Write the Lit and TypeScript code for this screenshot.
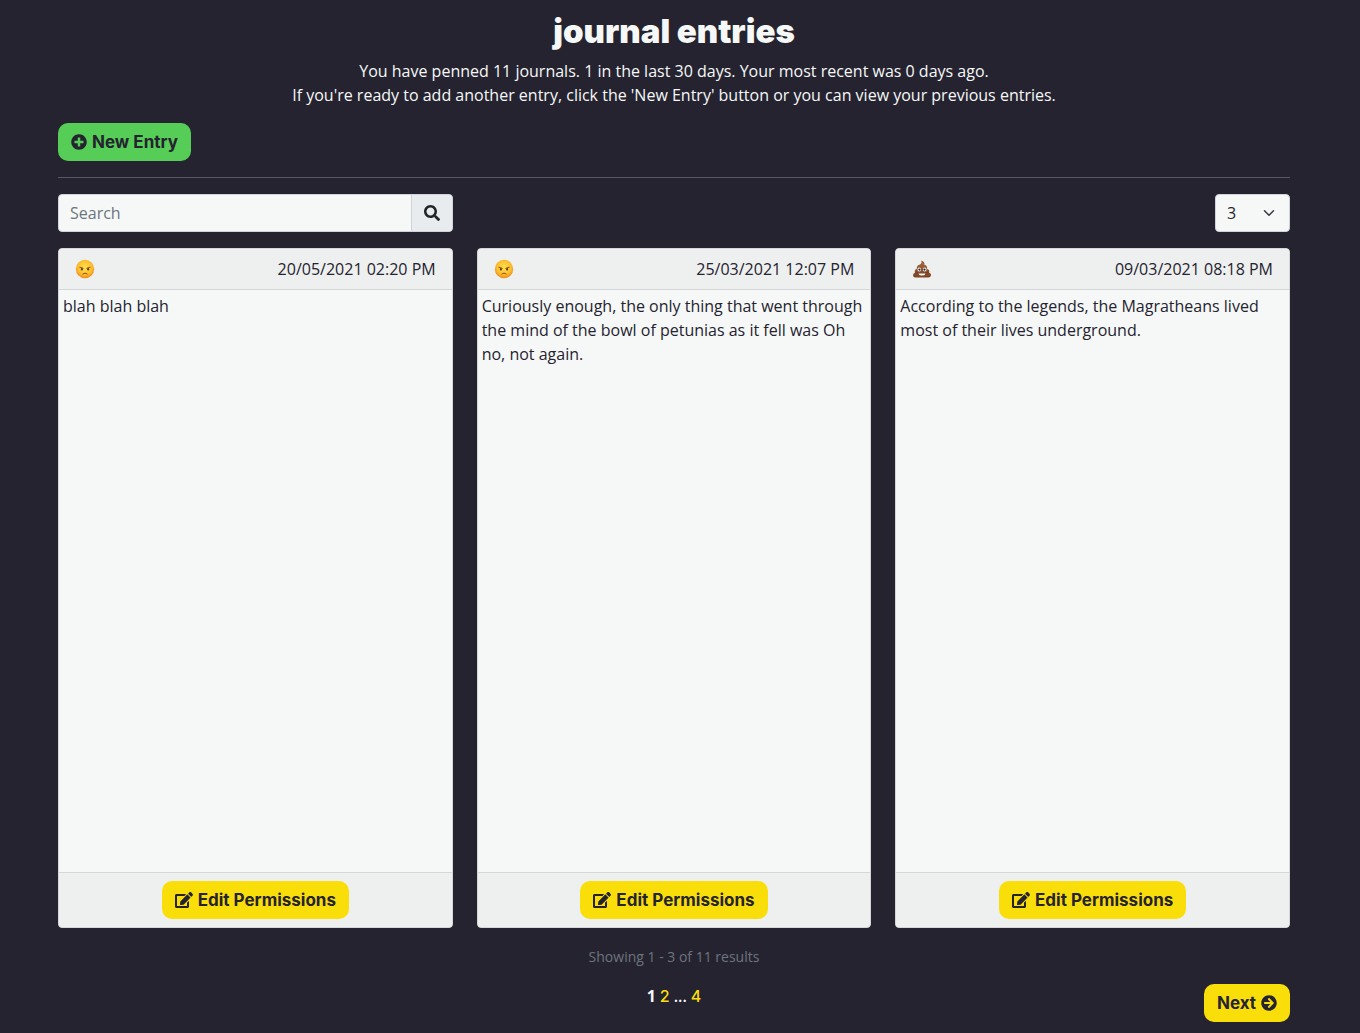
import { LitElement, html, css, svg } from "lit";
import { customElement, property, state } from "lit/decorators.js";

const ICONS = {
  plus: {
    box: "0 0 512 512",
    d: "M256 8C119 8 8 119 8 256s111 248 248 248 248-111 248-248S393 8 256 8zm144 276c0 6.6-5.4 12-12 12h-92v92c0 6.6-5.4 12-12 12h-56c-6.6 0-12-5.4-12-12v-92h-92c-6.6 0-12-5.4-12-12v-56c0-6.6 5.4-12 12-12h92v-92c0-6.6 5.4-12 12-12h56c6.6 0 12 5.4 12 12v92h92c6.6 0 12 5.4 12 12v56z",
  },
  search: {
    box: "0 0 512 512",
    d: "M505 442.7L405.3 343c-4.5-4.5-10.6-7-17-7H372c27.6-35.3 44-79.7 44-128C416 93.1 322.9 0 208 0S0 93.1 0 208s93.1 208 208 208c48.3 0 92.7-16.4 128-44v16.3c0 6.4 2.5 12.5 7 17l99.7 99.7c9.4 9.4 24.6 9.4 33.9 0l28.3-28.3c9.4-9.4 9.4-24.6.1-34zM208 336c-70.7 0-128-57.2-128-128 0-70.7 57.2-128 128-128 70.7 0 128 57.2 128 128 0 70.7-57.2 128-128 128z",
  },
  edit: {
    box: "0 0 576 512",
    d: "M402.6 83.2l90.2 90.2c3.8 3.8 3.8 10 0 13.8L274.4 405.6l-92.8 10.3c-12.4 1.4-22.9-9.1-21.5-21.5l10.3-92.8L388.8 83.2c3.8-3.8 10-3.8 13.8 0zm162-22.9l-48.8-48.8c-15.2-15.2-39.9-15.2-55.2 0l-35.4 35.4c-3.8 3.8-3.8 10 0 13.8l90.2 90.2c3.8 3.8 10 3.8 13.8 0l35.4-35.4c15.2-15.3 15.2-40 0-55.2zM384 346.2V448H64V128h229.8c3.2 0 6.2-1.3 8.5-3.5l40-40c7.6-7.6 2.2-20.5-8.5-20.5H48C21.5 64 0 85.5 0 112v352c0 26.5 21.5 48 48 48h352c26.5 0 48-21.5 48-48V306.2c0-10.7-12.9-16-20.5-8.5l-40 40c-2.2 2.3-3.5 5.3-3.5 8.5z",
  },
  next: {
    box: "0 0 512 512",
    d: "M256 8c137 0 248 111 248 248S393 504 256 504 8 393 8 256 119 8 256 8zm-28.9 143.6l75.5 72.4H120c-13.3 0-24 10.7-24 24v16c0 13.3 10.7 24 24 24h182.6l-75.5 72.4c-9.7 9.3-9.9 24.8-.4 34.3l11 10.9c9.4 9.4 24.6 9.4 33.9 0L404.3 273c9.4-9.4 9.4-24.6 0-33.9L271.6 106.3c-9.4-9.4-24.6-9.4-33.9 0l-11 10.9c-9.5 9.6-9.3 25.1.4 34.4z",
  },
};

const icon = (name: keyof typeof ICONS) => html`
  <svg class="icon icon-${name}" viewBox=${ICONS[name].box} aria-hidden="true">
    <path fill="currentColor" d=${ICONS[name].d}></path>
  </svg>
`;

type Mood = "angry" | "poo";

interface Entry {
  mood: Mood;
  date: string;
  text: string;
}

const ENTRIES: Entry[] = [
  { mood: "angry", date: "20/05/2021 02:20 PM", text: "blah blah blah" },
  {
    mood: "angry",
    date: "25/03/2021 12:07 PM",
    text: "Curiously enough, the only thing that went through the mind of the bowl of petunias as it fell was Oh no, not again.",
  },
  {
    mood: "poo",
    date: "09/03/2021 08:18 PM",
    text: "According to the legends, the Magratheans lived most of their lives underground.",
  },
];

const buttonStyles = css`
  .btn {
    display: inline-flex;
    align-items: center;
    justify-content: center;
    gap: 5px;
    height: 38px;
    padding: 0 13px;
    border: 0;
    border-radius: 10px;
    background: #fade0a;
    color: #252330;
    font: 700 17px/24px Inter, sans-serif;
    white-space: nowrap;
    cursor: pointer;
  }
  .btn.success {
    background: #55cd56;
  }
  .icon {
    display: block;
    flex: none;
    width: 16px;
    height: 16px;
  }
  .icon-edit {
    width: 18px;
  }
`;

@customElement("mood-face")
export class MoodFace extends LitElement {
  @property() mood: Mood = "angry";

  static styles = css`
    :host {
      display: block;
    }
    .face {
      display: block;
      width: 20px;
      height: 20px;
    }
  `;

  private angry() {
    return svg`
      <defs>
        <radialGradient id="skin" cx="50%" cy="42%" r="58%">
          <stop offset="0" stop-color="#ffdf4d"></stop>
          <stop offset="0.65" stop-color="#fdc02f"></stop>
          <stop offset="1" stop-color="#ee8a1d"></stop>
        </radialGradient>
      </defs>
      <circle cx="10" cy="10" r="9.2" fill="url(#skin)"></circle>
      <ellipse cx="6.9" cy="10.2" rx="1" ry="1.3" fill="#64380f"></ellipse>
      <ellipse cx="13.1" cy="10.2" rx="1" ry="1.3" fill="#64380f"></ellipse>
      <path d="M4.8 8.2Q6.8 8.3 8.2 9.3M15.2 8.2Q13.2 8.3 11.8 9.3M7.8 14.9Q10 13.1 12.2 14.9"
        fill="none" stroke="#7a4310" stroke-width=".9" stroke-linecap="round"></path>
    `;
  }

  private poo() {
    return svg`
      <defs>
        <linearGradient id="swirl" x1="0" y1="0" x2="0" y2="1">
          <stop offset="0" stop-color="#a5673f"></stop>
          <stop offset="1" stop-color="#7c4324"></stop>
        </linearGradient>
      </defs>
      <path d="M9.2 1.6C11.6 2.3 12.9 3.8 12.4 5.7C14.5 6.2 15.6 7.8 15 9.8C17 10.5 17.8 12 17.1 13.7
        C18.9 14.3 19.4 15.7 18.8 17C18.2 18.4 16.9 18.5 15.4 18.5H4.5C2.8 18.5 1.6 18.3 1.2 17
        C.7 15.5 1.5 14.2 3 13.7C2.3 12 3.1 10.4 4.9 9.8C4.4 7.8 5.5 6.4 7.4 5.8C9.4 5.2 9.9 3.8 9.2 1.6Z"
        fill="url(#swirl)"></path>
      <path d="M5.2 10Q10 11.4 14.4 9.5M3.4 14Q10 15 16.6 13.8" fill="none" stroke="#64331a" stroke-width=".6"></path>
      <ellipse cx="7.3" cy="10.5" rx="1.8" ry="2.1" fill="#fff"></ellipse>
      <ellipse cx="12.7" cy="10.5" rx="1.8" ry="2.1" fill="#fff"></ellipse>
      <circle cx="7.5" cy="10.6" r="1.1" fill="#22222a"></circle>
      <circle cx="12.5" cy="10.6" r="1.1" fill="#22222a"></circle>
      <path d="M6.4 14.4H13.6Q12.8 16.6 10 16.6Q7.2 16.6 6.4 14.4Z" fill="#fff"></path>
    `;
  }

  render() {
    return html`
      <svg class="face" viewBox="0 0 20 20" role="img" aria-label=${this.mood}>
        ${this.mood === "angry" ? this.angry() : this.poo()}
      </svg>
    `;
  }
}

@customElement("journal-card")
export class JournalCard extends LitElement {
  @property({ attribute: false }) entry!: Entry;

  static styles = [
    buttonStyles,
    css`
      :host {
        display: block;
        min-width: 0;
      }
      .card {
        box-sizing: border-box;
        display: flex;
        flex-direction: column;
        min-height: 680px;
        height: 100%;
        border: 1px solid #d4d6d7;
        border-radius: 4px;
        background: #f6f8f7;
        overflow: hidden;
      }
      .head {
        display: flex;
        align-items: center;
        justify-content: space-between;
        padding: 8px 16px;
        border-bottom: 1px solid #d4d6d7;
        background: #eeefef;
      }
      .body {
        flex: 1;
        margin: 0;
        padding: 4px;
      }
      .foot {
        display: flex;
        justify-content: center;
        padding: 8px 16px;
        border-top: 1px solid #d4d6d7;
        background: #eeefef;
      }
    `,
  ];

  render() {
    return html`
      <article class="card">
        <header class="head">
          <mood-face .mood=${this.entry.mood}></mood-face>
          <time>${this.entry.date}</time>
        </header>
        <p class="body">${this.entry.text}</p>
        <footer class="foot">
          <button class="btn" type="button">${icon("edit")}Edit Permissions</button>
        </footer>
      </article>
    `;
  }
}

@customElement("app-root")
export class AppRoot extends LitElement {
  @state() private perPage = "3";

  static styles = [
    buttonStyles,
    css`
      :host {
        display: block;
        box-sizing: border-box;
        min-height: 100vh;
        padding: 12px 70px 11px 58px;
        background: #252330;
        color: #252330;
        font: 400 16px/24px "Open Sans", sans-serif;
      }
      .intro {
        margin-bottom: 16px;
        color: #f6f8f7;
        text-align: center;
      }
      .title {
        margin: 0 0 8px;
        font: 900 33px/39px Inter, sans-serif;
      }
      .lead {
        margin: 0;
        font-weight: 500;
      }
      .rule {
        height: 1px;
        margin: 16px 0;
        border: 0;
        background: #5a5863;
      }
      .tools {
        display: flex;
        justify-content: space-between;
        margin-bottom: 16px;
      }
      .columns {
        display: grid;
        grid-template-columns: repeat(3, minmax(0, 1fr));
        gap: 24px;
      }
      .search {
        box-sizing: border-box;
        display: flex;
        width: calc((100% - 48px) / 3);
        height: 38px;
        border: 1px solid #ced4da;
        border-radius: 4px;
        background: #f6f8f7;
        overflow: hidden;
      }
      .field {
        flex: 1;
        min-width: 0;
        padding: 0 11px;
        border: 0;
        background: transparent;
        color: #252330;
        font: inherit;
      }
      .field::placeholder {
        color: #6c757d;
        opacity: 1;
      }
      .go {
        display: flex;
        align-items: center;
        padding: 0 12px;
        border: 0;
        border-left: 1px solid #ced4da;
        background: #e9ecef;
        color: #212529;
        cursor: pointer;
      }
      .pick {
        display: grid;
        grid-template-columns: 1fr 32px;
        align-items: center;
        width: 75px;
      }
      .select {
        grid-area: 1 / 1 / 2 / 3;
        box-sizing: border-box;
        width: 100%;
        height: 38px;
        padding: 0 11px;
        border: 1px solid #ced4da;
        border-radius: 4px;
        appearance: none;
        background: #f6f8f7;
        color: #252330;
        font: inherit;
      }
      .chevron {
        grid-area: 1 / 2;
        width: 12px;
        height: 12px;
        margin-left: 5px;
        pointer-events: none;
      }
      .count {
        margin: 18px 0 16px;
        color: #6c757d;
        font-size: 14px;
        line-height: 22px;
        text-align: center;
      }
      .pager {
        display: grid;
        grid-template-columns: 1fr auto 1fr;
        align-items: start;
        color: #f6f8f7;
      }
      .pages {
        display: flex;
        grid-column: 2;
        gap: 4px;
      }
      .page {
        color: #fade0a;
        font-family: Inter, sans-serif;
        font-weight: 500;
        text-decoration: none;
      }
      .current {
        font-weight: 700;
      }
      .dots {
        font-weight: 600;
      }
      .pager .btn {
        justify-self: end;
      }
    `,
  ];

  render() {
    return html`
      <main>
        <div class="intro">
          <h1 class="title">journal entries</h1>
          <p class="lead">You have penned 11 journals. 1 in the last 30 days. Your most recent was 0 days ago.</p>
          <p class="lead">
            If you're ready to add another entry, click the 'New Entry' button or you can view your previous entries.
          </p>
        </div>
        <button class="btn success" type="button">${icon("plus")}New Entry</button>
        <hr class="rule" />
        <div class="tools">
          <form class="search" role="search" @submit=${(e: Event) => e.preventDefault()}>
            <input class="field" type="text" placeholder="Search" aria-label="Search" />
            <button class="go" type="submit" aria-label="Search">${icon("search")}</button>
          </form>
          <div class="pick">
            <select
              class="select"
              aria-label="Entries per page"
              .value=${this.perPage}
              @change=${(e: Event) => (this.perPage = (e.target as HTMLSelectElement).value)}
            >
              <option value="3">3</option>
              <option value="6">6</option>
              <option value="9">9</option>
            </select>
            <svg class="chevron" viewBox="0 0 16 16" aria-hidden="true">
              <path d="M2 5l6 6 6-6" fill="none" stroke="#343a40" stroke-width="2" stroke-linecap="round" stroke-linejoin="round"></path>
            </svg>
          </div>
        </div>
        <section class="columns">
          ${ENTRIES.map((entry) => html`<journal-card .entry=${entry}></journal-card>`)}
        </section>
        <p class="count">Showing 1 - 3 of 11 results</p>
        <div class="pager">
          <nav class="pages" aria-label="Pages">
            <span class="current" aria-current="page">1</span>
            <a class="page" href="#page-2">2</a>
            <span class="dots">...</span>
            <a class="page" href="#page-4">4</a>
          </nav>
          <button class="btn" type="button">Next${icon("next")}</button>
        </div>
      </main>
    `;
  }
}
